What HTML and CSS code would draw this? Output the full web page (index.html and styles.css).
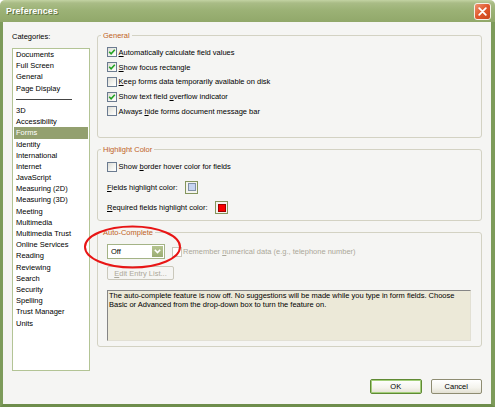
FILE: index.html
```html
<!DOCTYPE html>
<html lang="en">
<head>
  <meta charset="UTF-8">
  <title>Preferences</title>
  <link rel="stylesheet" href="styles.css">
</head>
<body>
  <div class="window">
    <div class="titlebar">
      <span class="title">Preferences</span>
      <button class="close-btn" title="Close">
        <svg width="9" height="9" viewBox="0 0 9 9"><path d="M1.2 1.2L7.8 7.8M7.8 1.2L1.2 7.8" stroke="#fff" stroke-width="1.8" stroke-linecap="round"/></svg>
      </button>
    </div>
    <div class="frame">
      <div class="content">
        <div class="main">
          <div class="categories">
            <div class="label">Categories:</div>
            <ul class="list">
              <li>Documents</li>
              <li>Full Screen</li>
              <li>General</li>
              <li>Page Display</li>
              <li class="separator"></li>
              <li>3D</li>
              <li>Accessibility</li>
              <li class="selected">Forms</li>
              <li>Identity</li>
              <li>International</li>
              <li>Internet</li>
              <li>JavaScript</li>
              <li>Measuring (2D)</li>
              <li>Measuring (3D)</li>
              <li>Meeting</li>
              <li>Multimedia</li>
              <li>Multimedia Trust</li>
              <li>Online Services</li>
              <li>Reading</li>
              <li>Reviewing</li>
              <li>Search</li>
              <li>Security</li>
              <li>Spelling</li>
              <li>Trust Manager</li>
              <li>Units</li>
            </ul>
          </div>

          <div class="panels">
            <fieldset class="group group-general">
              <legend>General</legend>
              <div class="check-row"><span class="checkbox checked"><svg width="8" height="8" viewBox="0 0 8 8"><path d="M1.2 3.8L3.1 5.8L6.8 1.8" fill="none" stroke="#22a322" stroke-width="1.6"/></svg></span><span><u>A</u>utomatically calculate field values</span></div>
              <div class="check-row"><span class="checkbox checked"><svg width="8" height="8" viewBox="0 0 8 8"><path d="M1.2 3.8L3.1 5.8L6.8 1.8" fill="none" stroke="#22a322" stroke-width="1.6"/></svg></span><span><u>S</u>how focus rectangle</span></div>
              <div class="check-row"><span class="checkbox"></span><span><u>K</u>eep forms data temporarily available on disk</span></div>
              <div class="check-row"><span class="checkbox checked"><svg width="8" height="8" viewBox="0 0 8 8"><path d="M1.2 3.8L3.1 5.8L6.8 1.8" fill="none" stroke="#22a322" stroke-width="1.6"/></svg></span><span>Show text field <u>o</u>verflow indicator</span></div>
              <div class="check-row"><span class="checkbox"></span><span>Always <u>h</u>ide forms document message bar</span></div>
            </fieldset>

            <fieldset class="group group-highlight">
              <legend>Highlight Color</legend>
              <div class="check-row"><span class="checkbox"></span><span>Show <u>b</u>order hover color for fields</span></div>
              <div class="color-row"><span><u>F</u>ields highlight color:</span><span class="swatch"><span class="swatch-fill fill-blue"></span></span></div>
              <div class="color-row"><span><u>R</u>equired fields highlight color:</span><span class="swatch"><span class="swatch-fill fill-red"></span></span></div>
            </fieldset>

            <fieldset class="group group-auto">
              <legend>Auto-Complete</legend>
              <div class="auto-row">
                <div class="select">
                  <span class="select-value">Off</span>
                  <span class="select-arrow"><svg width="7" height="5" viewBox="0 0 7 5"><path d="M0.8 0.8L3.5 3.6L6.2 0.8" fill="none" stroke="#fff" stroke-width="1.6"/></svg></span>
                </div>
                <div class="check-row disabled"><span class="checkbox"></span><span>Remember <u>n</u>umerical data (e.g., telephone number)</span></div>
              </div>
              <button class="edit-btn" disabled><u>E</u>dit Entry List...</button>
              <div class="info-box">The auto-complete feature is now off. No suggestions will be made while you type in form fields. Choose Basic or Advanced from the drop-down box to turn the feature on.</div>
            </fieldset>
          </div>
        </div>

        <div class="actions">
          <button class="btn btn-default">OK</button>
          <button class="btn">Cancel</button>
        </div>
      </div>
    </div>

    <svg class="callout" width="495" height="407" viewBox="0 0 495 407">
      <ellipse cx="132.5" cy="247" rx="47.5" ry="20.5" fill="none" stroke="#e81515" stroke-width="2"/>
    </svg>
  </div>
</body>
</html>
```

FILE: styles.css
```css
:root {
  --frame: #7d9b5a;
  --panel-bg: #f5f5f3;
  --group-border: #d3d2c3;
  --legend: #c0621e;
  --disabled: #aca899;
  --olive: #93a06f;
}

html, body {
  margin: 0;
  padding: 0;
}

body {
  font-family: 'Liberation Sans', Arial, sans-serif;
  font-size: 7.5px;
  color: #000;
  background: #fff;
}

.window {
  position: relative;
  width: 495px;
  height: 407px;
  display: flex;
  flex-direction: column;
}

/* Title bar */
.titlebar {
  height: 22px;
  flex: none;
  display: flex;
  align-items: center;
  justify-content: space-between;
  padding: 0 4px 0 6px;
  box-sizing: border-box;
  background: linear-gradient(to bottom, #c3d3a3 0, #a9bc86 3px, #9cb276 45%, #91a86a 100%);
  border-radius: 5px 5px 0 0;
}

.title {
  color: #fff;
  font-weight: 700;
  font-size: 8.9px;
  letter-spacing: 0.1px;
  text-shadow: 1px 1px 0 #5f7440;
}

.close-btn {
  width: 17px;
  height: 17px;
  padding: 0;
  border: 1px solid #f4f0e8;
  border-radius: 3px;
  background: linear-gradient(135deg, #ee9470 0%, #e0582c 50%, #c9441c 100%);
  display: flex;
  align-items: center;
  justify-content: center;
}

.frame {
  flex: 1;
  display: flex;
  border-left: 3px solid var(--frame);
  border-right: 4px solid var(--frame);
  border-bottom: 3px solid #6e8d4c;
}

.content {
  flex: 1;
  display: flex;
  flex-direction: column;
  background: var(--panel-bg);
  padding: 8.5px 9px 0 9px;
}

.main {
  display: flex;
  gap: 7px;
}

/* Categories list */
.categories {
  width: 78px;
  flex: none;
}

.label {
  line-height: 12px;
  margin-bottom: 5.5px;
}

.list {
  list-style: none;
  margin: 0;
  padding: 0 1px;
  height: 323px;
  box-sizing: border-box;
  background: #fff;
  border: 1px solid #b3c495;
}

.list li {
  height: 11.2px;
  line-height: 11.2px;
  padding-left: 2px;
  white-space: nowrap;
}

.list li.selected {
  background: var(--olive);
  color: #fff;
}

.list li.separator {
  position: relative;
}

.list li.separator::after {
  content: "";
  position: absolute;
  left: 1.5px;
  top: 5px;
  width: 56px;
  height: 1px;
  background: #444;
}

/* Group boxes */
.panels {
  flex: 1;
  display: flex;
  flex-direction: column;
  gap: 7px;
}

.group {
  margin: 0;
  min-width: 0;
  border: 1px solid var(--group-border);
  border-radius: 3px;
  padding: 0 10px 0 9px;
}

.group legend {
  color: var(--legend);
  line-height: 10px;
  padding: 0 2px;
  margin-left: -6px;
}

.group-general {
  padding-top: 4.6px;
  padding-bottom: 18px;
}

.group-highlight {
  padding-top: 5px;
  padding-bottom: 5px;
  display: flex;
  flex-direction: column;
  gap: 6.6px;
}

.group-auto {
  padding-top: 6.3px;
  padding-bottom: 5px;
}

.check-row {
  height: 14.7px;
  display: flex;
  align-items: center;
  white-space: nowrap;
}

.group-highlight .check-row,
.color-row {
  height: 14px;
}

.checkbox {
  width: 10px;
  height: 10px;
  box-sizing: border-box;
  flex: none;
  margin-right: 1.6px;
  border: 1px solid #6b7b90;
  background: linear-gradient(135deg, #dcdcd6 0%, #f4f4f0 60%, #fff 100%);
  display: flex;
  align-items: center;
  justify-content: center;
}

.check-row.disabled {
  color: var(--disabled);
}

.check-row.disabled .checkbox {
  border-color: #cac8bb;
  background: #fff;
  margin-right: 1px;
}

.color-row {
  display: flex;
  align-items: center;
  gap: 8px;
}

.swatch {
  width: 13px;
  height: 13px;
  box-sizing: border-box;
  border: 1px solid #84955c;
  padding: 1.5px;
  background: #f3f3ee;
}

.swatch-fill {
  display: block;
  width: 100%;
  height: 100%;
  box-sizing: border-box;
  border: 1px solid #8090a8;
}

.fill-blue {
  background: #c6d4f2;
}

.fill-red {
  background: #f80000;
  border-color: #a00000;
}

/* Auto-Complete */
.auto-row {
  display: flex;
  align-items: center;
  gap: 7px;
  height: 15px;
}

.select {
  width: 58px;
  height: 15px;
  box-sizing: border-box;
  border: 1px solid #a4b386;
  background: #fff;
  display: flex;
  align-items: stretch;
}

.select-value {
  flex: 1;
  padding-left: 3px;
  line-height: 13px;
}

.select-arrow {
  width: 11px;
  margin: 1px;
  background: linear-gradient(to bottom, #b5c48f, #9aac72);
  display: flex;
  align-items: center;
  justify-content: center;
}

.edit-btn {
  display: block;
  margin-top: 7.3px;
  width: 67px;
  height: 14px;
  padding: 0;
  font-family: inherit;
  font-size: 7.5px;
  color: var(--disabled);
  background: var(--panel-bg);
  border: 1px solid #cac8bb;
  border-radius: 2px;
}

.info-box {
  margin-top: 9.4px;
  height: 51.6px;
  box-sizing: border-box;
  padding: 0 1px;
  line-height: 9.4px;
  background: #ece9d8;
  border: 1px solid;
  border-color: #858585 #e2e0d4 #e2e0d4 #858585;
}

/* Dialog buttons */
.actions {
  margin-top: auto;
  display: flex;
  justify-content: flex-end;
  gap: 9px;
  padding-bottom: 10.5px;
}

.btn {
  width: 51.5px;
  height: 14.5px;
  padding: 0;
  font-family: inherit;
  font-size: 7.5px;
  color: #000;
  border: 1px solid #8e8c72;
  border-radius: 2px;
  background: linear-gradient(to bottom, #fff 0%, #f4f3ec 60%, #e3e1d3 100%);
}

.btn-default {
  border-color: #5f8a32;
  box-shadow: inset 0 0 0 1px #a3cf7a;
}

.callout {
  position: absolute;
  left: 0;
  top: 0;
  pointer-events: none;
}
```
